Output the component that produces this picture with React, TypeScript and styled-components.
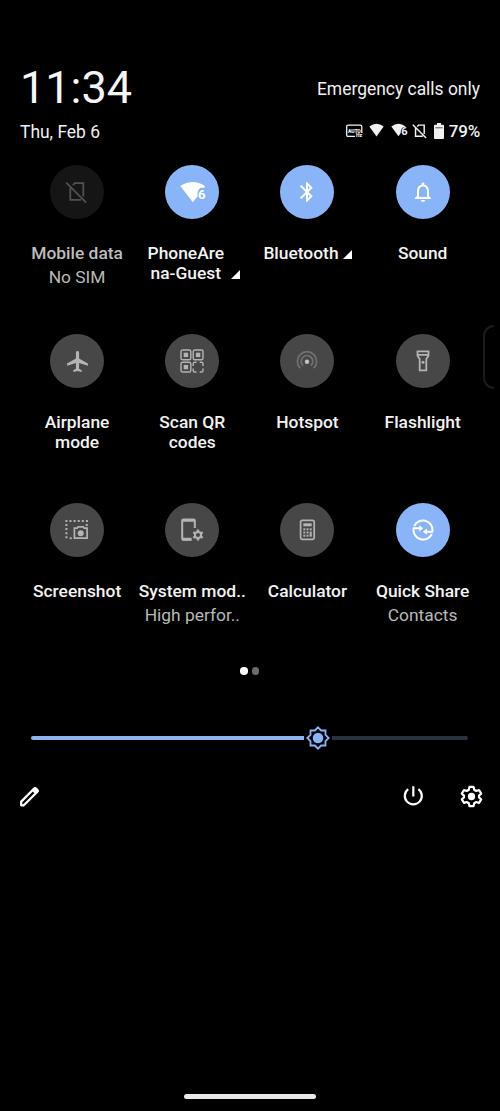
import React from 'react';
import styled, { createGlobalStyle } from 'styled-components';
import { MdAirplanemodeActive, MdBluetooth, MdNotificationsNone } from 'react-icons/md';

const GlobalStyle = createGlobalStyle`
  * { box-sizing: border-box; }
  body { margin: 0; background: #000; }
`;

type Tone = 'on' | 'off' | 'disabled';

const Screen = styled.main`
  position: relative;
  display: flex;
  flex-direction: column;
  width: 500px;
  height: 1111px;
  overflow: hidden;
  background: #000;
  color: #f1f1f1;
  font-family: Roboto, 'Liberation Sans', sans-serif;
`;

const Header = styled.header`
  display: flex;
  flex-direction: column;
  padding: 60px 20px 0;
`;

const HeaderRow = styled.div<{ $height: number }>`
  display: flex;
  align-items: center;
  justify-content: space-between;
  height: ${(p) => p.$height}px;
`;

const Clock = styled.time`
  font-size: 45px;
  line-height: 54px;
  color: #f6f6f6;
`;

const HeaderText = styled.span`
  padding-top: 2px;
  font-size: 17.45px;
  line-height: 22px;
  white-space: nowrap;
`;

const StatusIcons = styled.div`
  display: flex;
  align-items: center;
  svg { display: block; }
`;

const Battery = styled.span`
  margin-left: 5px;
  padding-top: 1px;
  font-size: 17px;
  font-weight: 500;
  line-height: 22px;
  letter-spacing: -0.2px;
`;

const Tiles = styled.section`
  display: grid;
  grid-template-columns: repeat(4, 115.2px);
  grid-auto-rows: 169px;
  padding: 20px 0 0 19.5px;
`;

const TileBox = styled.div`
  display: flex;
  flex-direction: column;
  align-items: center;
`;

const discColor: Record<Tone, string> = { on: '#8ab4f8', off: '#474747', disabled: '#151515' };
const glyphColor: Record<Tone, string> = { on: '#ffffff', off: '#b4b4b4', disabled: '#515151' };

const Disc = styled.div<{ $tone: Tone }>`
  display: flex;
  align-items: center;
  justify-content: center;
  width: 54px;
  height: 54px;
  border-radius: 50%;
  background: ${(p) => discColor[p.$tone]};
  color: ${(p) => glyphColor[p.$tone]};
  svg { display: block; }
`;

const TitleRow = styled.div<{ $gap: number }>`
  display: flex;
  align-items: flex-end;
  gap: ${(p) => p.$gap}px;
  margin-top: 24px;
  padding-left: ${(p) => (p.$gap > 5 ? 3 : 0)}px;
  svg { display: block; margin-bottom: 4px; }
`;

const Title = styled.div<{ $dim: boolean }>`
  font-size: 17.4px;
  font-weight: 500;
  line-height: 20px;
  text-align: center;
  white-space: pre;
  color: ${(p) => (p.$dim ? '#bdbdbd' : '#f3f3f3')};
`;

const Subtitle = styled.div`
  margin-top: 4px;
  font-size: 17.4px;
  line-height: 21px;
  white-space: nowrap;
  color: #b9b9b9;
`;

const Pager = styled.div`
  display: flex;
  justify-content: center;
  gap: 4px;
  margin-top: -5px;
  padding-right: 1px;
`;

const Dot = styled.i<{ $active?: boolean }>`
  width: 7.5px;
  height: 7.5px;
  border-radius: 50%;
  background: ${(p) => (p.$active ? '#fff' : '#6b6b6b')};
`;

const Brightness = styled.div`
  display: flex;
  align-items: center;
  height: 26px;
  margin: 50px 32px 0 31px;
  svg { display: block; margin: 0 1px; }
`;

const Track = styled.div<{ $filled?: boolean }>`
  width: ${(p) => (p.$filled ? '273px' : 'auto')};
  flex: ${(p) => (p.$filled ? 'none' : '1')};
  height: 4px;
  border-radius: ${(p) => (p.$filled ? '2px 0 0 2px' : '0 2px 2px 0')};
  background: ${(p) => (p.$filled ? '#8fb3ee' : '#27323f')};
`;

const Footer = styled.footer`
  display: flex;
  align-items: center;
  height: 30px;
  margin-top: 31px;
  padding: 0 16.5px 0 17px;
  color: #fff;
  svg { display: block; }
`;

const FooterActions = styled.div`
  display: flex;
  gap: 34px;
  margin-left: auto;
`;

const HomeBar = styled.div`
  width: 132px;
  height: 5px;
  margin: auto auto 12px;
  border-radius: 3px;
  background: #e9e9e9;
`;

const EdgeHandle = styled.div`
  position: absolute;
  top: 325px;
  right: 6px;
  width: 11px;
  height: 64px;
  border: 2px solid #1b1b1b;
  border-right: 0;
  border-radius: 12px 0 0 12px;
`;

const NoSim = ({ size }: { size: number }) => (
  <svg width={size} height={size} viewBox="0 0 24 24" fill="none" stroke="currentColor" strokeWidth={size < 20 ? 2.2 : 1.8}>
    <path d="M7.8 5.2 9.8 3.2H18.3V16.4M16.2 19.9H5.3V8M1.2 2.6 21.2 22.6" />
  </svg>
);

const Fan = () => (
  <svg width="15" height="15" viewBox="0 0 15 15" fill="currentColor">
    <path d="M0.3 3.5Q7.5-2 14.7 3.5L7.5 13.5Z" />
  </svg>
);

const FanSix = () => (
  <svg width="27" height="24" viewBox="-0.8 0 27 24" fill="currentColor">
    <path d="M0.5 6Q13 -2 25.2 6L24.2 7.9Q18.3 6.8 17.7 13.5V16.6L13 22.2Z" />
    <text x="18.2" y="19.4" fontFamily="Roboto, sans-serif" fontWeight="700" fontSize="13">6</text>
  </svg>
);

const StatusFanSix = () => (
  <svg width="17" height="15" viewBox="0 0 17 15" fill="currentColor">
    <path d="M0.3 3.5Q7.5-2 14.7 3.5L13.6 3.9Q9.6 4.4 9.7 10.1L7.5 13.3Z" />
    <text x="10.2" y="12.4" fontFamily="Roboto, sans-serif" fontWeight="700" fontSize="11">6</text>
  </svg>
);

const AutoHz = () => (
  <svg width="17" height="16" viewBox="0 0 17 16" fill="none" stroke="currentColor" overflow="visible">
    <path d="M9 13.4H2.2Q.7 13.4 .7 11.9V3.7Q.7 2.2 2.2 2.2H14.3Q15.8 2.2 15.8 3.7V9.9" strokeWidth="1.3" />
    <text x="2" y="9.6" fontFamily="Roboto, sans-serif" fontSize="5" fontWeight="900" letterSpacing="-0.15" fill="currentColor" stroke="none">AUTO</text>
    <text x="10" y="14.4" fontFamily="Roboto, sans-serif" fontSize="5" fontWeight="900" fill="currentColor" stroke="none">Hz</text>
  </svg>
);

const BatteryIcon = () => (
  <svg width="10" height="16" viewBox="0 0 10 16" fill="currentColor">
    <path d="M3 0H7V1.8H9Q10 1.8 10 2.8V15Q10 16 9 16H1Q0 16 0 15V2.8Q0 1.8 1 1.8H3Z" />
    <path d="M1.3 4.8H8.7" stroke="#555" strokeWidth="1" />
  </svg>
);

const QrIcon = () => (
  <svg width="24" height="24" viewBox="0 0 24 24" fill="none" stroke="currentColor" strokeWidth="1.4">
    {[[1, 1], [13.2, 1], [1, 13.2]].map(([x, y]) => (
      <g key={`${x}-${y}`}>
        <rect x={x} y={y} width="9.8" height="9.8" rx="1.6" />
        <rect x={x + 2.7} y={y + 2.7} width="4.4" height="4.4" fill="currentColor" stroke="none" />
      </g>
    ))}
    <path d="M13.2 17V14.8Q13.2 13.2 14.8 13.2H16.5M19.7 13.2H21.4Q23 13.2 23 14.8V17M23 19.5V21.4Q23 23 21.4 23H19.7M16.5 23H14.8Q13.2 23 13.2 21.4V19.5" />
  </svg>
);

const HotspotIcon = () => (
  <svg width="24" height="24" viewBox="0 0 24 24" fill="none" stroke="#727272" strokeWidth="1.7">
    <path d="M5.3 19.2A9.6 9.6 0 1 1 18.7 19.2M8.2 16.7A5.8 5.8 0 1 1 15.8 16.7" />
    <circle cx="12" cy="12.8" r="2.2" fill="#c2c2c2" stroke="none" />
  </svg>
);

const FlashlightIcon = () => (
  <svg width="24" height="24" viewBox="0 0 24 24" fill="none" stroke="currentColor" strokeWidth="1.8">
    <path d="M6.5 2.4H17.5V6.8L15.3 10V21.4H8.7V10L6.5 6.8ZM6.5 5.8H17.5" />
    <circle cx="12" cy="13.3" r="1.5" fill="currentColor" stroke="none" />
  </svg>
);

const ScreenshotIcon = () => (
  <svg width="24" height="22" viewBox="0.6 0 24 22" fill="none" stroke="currentColor">
    <path d="M1 2H24" strokeWidth="2" strokeDasharray="2 2.1" />
    <path d="M2 5V20.5M22.3 5V7" strokeWidth="2" strokeDasharray="2 2.1" />
    <path d="M5.3 19.2H7.3" strokeWidth="2" />
    <path d="M10 9.2H12.8L13.8 7.8H18.8L19.8 9.2H22.7V19.2H10Z" strokeWidth="1.7" />
    <circle cx="16.3" cy="14.2" r="3" fill="currentColor" stroke="none" />
  </svg>
);

const SystemIcon = () => (
  <svg width="24" height="24" viewBox="0 0 24 24" fill="none" stroke="currentColor">
    <path d="M11.5 21.7H3.4Q2.2 21.7 2.2 20.5V2.8Q2.2 1.6 3.4 1.6H13.6Q14.8 1.6 14.8 2.8V10" strokeWidth="2" />
    <path d="M2.2 2.3H14.8M2.2 21.2H11.5" strokeWidth="2.8" />
    <circle cx="18" cy="17" r="3.1" strokeWidth="2" />
    <path d="M18 11.6V13.6M18 20.4V22.4M13.3 14.3 15 15.3M21 18.7 22.7 19.7M13.3 19.7 15 18.7M21 15.3 22.7 14.3" strokeWidth="2.4" />
  </svg>
);

const CalculatorIcon = () => (
  <svg width="17" height="22" viewBox="0 0 17 22" fill="currentColor">
    <rect x="1.6" y="1.4" width="13.6" height="19" rx="1.6" fill="none" stroke="currentColor" strokeWidth="1.7" />
    <rect x="4.3" y="4.3" width="8.4" height="3" />
    {[9.3, 12.5, 15.7].map((y) => [4.3, 7.5, 10.7].map((x) => (
      <rect key={`${x}-${y}`} x={x} y={y} width="2" height={x === 10.7 && y === 12.5 ? 4 : 2} />
    )))}
  </svg>
);

const QuickShareIcon = () => (
  <svg width="22" height="22" viewBox="0 0 22 22" fill="none" stroke="currentColor" strokeWidth="2">
    <path d="M2.2 7A9.6 9.6 0 0 1 20.5 11.6L20.3 12.7H12.5" />
    <path d="M19.8 15A9.6 9.6 0 0 1 1.5 10.4L1.7 9.3H9.5" />
    <path d="M7.2 6.2 11.1 9.3 7.2 12.4ZM14.8 9.6 10.9 12.7 14.8 15.8Z" fill="currentColor" stroke="none" />
  </svg>
);

const BrightnessIcon = () => (
  <svg width="26" height="26" viewBox="0 0 26 26" fill="none" stroke="#8ab4f8" strokeWidth="1.8">
    <path d="M13 2.3 16.1 5.5H20.5V9.9L23.7 13 20.5 16.1V20.5H16.1L13 23.7 9.9 20.5H5.5V16.1L2.3 13 5.5 9.9V5.5H9.9Z" />
    <circle cx="13" cy="13" r="5.3" fill="#8ab4f8" stroke="none" />
  </svg>
);

const PencilIcon = () => (
  <svg width="24" height="24" viewBox="0 0 24 24" fill="none" stroke="currentColor" strokeWidth="2.3" strokeLinejoin="round">
    <path d="M4.2 20.3V16.6L17 3.8Q18.1 2.9 19.2 3.9L20.1 4.8Q21.1 5.9 20.1 7L6.8 20.3Z" />
    <path d="M15.8 5 18 3 20.8 5.9 18.8 8Z" fill="currentColor" />
  </svg>
);

const PowerIcon = () => (
  <svg width="24" height="24" viewBox="0 0 24 24" fill="none" stroke="currentColor" strokeWidth="2.2">
    <path d="M12.3 2.2V12.4M7.2 5.1A8.5 8.5 0 1 0 17.4 5.1" />
  </svg>
);

const GearIcon = () => (
  <svg width="25" height="25" viewBox="0 0 24 24" fill="none" stroke="currentColor" strokeWidth="2.1" strokeLinejoin="round">
    <path d="M10 2.8H14L14.6 5.5 16.6 6.7 19.2 5.8 21.3 9.3 19.2 11.2V12.8L21.3 14.7 19.2 18.2 16.6 17.3 14.6 18.5 14 21.2H10L9.4 18.5 7.4 17.3 4.8 18.2 2.7 14.7 4.8 12.8V11.2L2.7 9.3 4.8 5.8 7.4 6.7 9.4 5.5Z" />
    <circle cx="12" cy="12" r="3.5" fill="currentColor" stroke="none" />
  </svg>
);

const Expand = () => (
  <svg width="9" height="9" viewBox="0 0 9 9" fill="#fff">
    <path d="M9 0V9H0Z" />
  </svg>
);

interface TileProps {
  icon: React.ReactNode;
  title: string;
  subtitle?: string;
  tone?: Tone;
  expandGap?: number;
}

const Tile = ({ icon, title, subtitle, tone = 'off', expandGap }: TileProps) => (
  <TileBox>
    <Disc $tone={tone}>{icon}</Disc>
    <TitleRow $gap={expandGap ?? 0}>
      <Title $dim={tone === 'disabled'}>{title}</Title>
      {expandGap !== undefined && <Expand />}
    </TitleRow>
    {subtitle && <Subtitle>{subtitle}</Subtitle>}
  </TileBox>
);

const tiles: TileProps[] = [
  { icon: <NoSim size={24} />, title: 'Mobile data', subtitle: 'No SIM', tone: 'disabled' },
  { icon: <FanSix />, title: 'PhoneAre\nna-Guest', tone: 'on', expandGap: 7 },
  { icon: <MdBluetooth size={24} />, title: 'Bluetooth', tone: 'on', expandGap: 4 },
  { icon: <MdNotificationsNone size={24} />, title: 'Sound', tone: 'on' },
  { icon: <MdAirplanemodeActive size={25} />, title: 'Airplane\nmode' },
  { icon: <QrIcon />, title: 'Scan QR\ncodes' },
  { icon: <HotspotIcon />, title: 'Hotspot' },
  { icon: <FlashlightIcon />, title: 'Flashlight' },
  { icon: <ScreenshotIcon />, title: 'Screenshot' },
  { icon: <SystemIcon />, title: 'System mod..', subtitle: 'High perfor..' },
  { icon: <CalculatorIcon />, title: 'Calculator' },
  { icon: <QuickShareIcon />, title: 'Quick Share', subtitle: 'Contacts', tone: 'on' },
];

const StatusGap = styled.span<{ $width: number }>`
  width: ${(p) => p.$width}px;
`;

export default function App() {
  return (
    <Screen>
      <GlobalStyle />
      <Header>
        <HeaderRow $height={56}>
          <Clock>11:34</Clock>
          <HeaderText>Emergency calls only</HeaderText>
        </HeaderRow>
        <HeaderRow $height={29}>
          <HeaderText>Thu, Feb 6</HeaderText>
          <StatusIcons>
            <AutoHz />
            <StatusGap $width={6} />
            <Fan />
            <StatusGap $width={7} />
            <StatusFanSix />
            <StatusGap $width={4} />
            <NoSim size={16} />
            <StatusGap $width={6} />
            <BatteryIcon />
            <Battery>79%</Battery>
          </StatusIcons>
        </HeaderRow>
      </Header>
      <Tiles>
        {tiles.map((tile) => (
          <Tile key={tile.title} {...tile} />
        ))}
      </Tiles>
      <Pager>
        <Dot $active />
        <Dot />
      </Pager>
      <Brightness>
        <Track $filled />
        <BrightnessIcon />
        <Track />
      </Brightness>
      <Footer>
        <PencilIcon />
        <FooterActions>
          <PowerIcon />
          <GearIcon />
        </FooterActions>
      </Footer>
      <HomeBar />
      <EdgeHandle />
    </Screen>
  );
}
